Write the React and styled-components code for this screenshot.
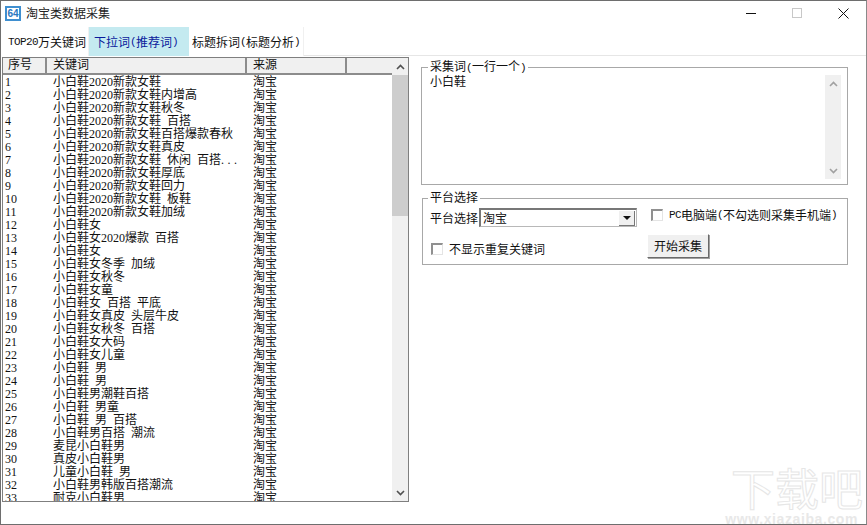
import React from 'react'
import styled, { createGlobalStyle } from 'styled-components'

const GlobalStyle = createGlobalStyle`
  html, body {
    margin: 0;
    padding: 0;
    background: #fff;
  }
  * { box-sizing: border-box; }
`

const rows = [
  '小白鞋2020新款女鞋', '小白鞋2020新款女鞋内增高', '小白鞋2020新款女鞋秋冬', '小白鞋2020新款女鞋 百搭',
  '小白鞋2020新款女鞋百搭爆款春秋', '小白鞋2020新款女鞋真皮', '小白鞋2020新款女鞋 休闲 百搭...', '小白鞋2020新款女鞋厚底',
  '小白鞋2020新款女鞋回力', '小白鞋2020新款女鞋 板鞋', '小白鞋2020新款女鞋加绒', '小白鞋女',
  '小白鞋女2020爆款 百搭', '小白鞋女', '小白鞋女冬季 加绒', '小白鞋女秋冬',
  '小白鞋女童', '小白鞋女 百搭 平底', '小白鞋女真皮 头层牛皮', '小白鞋女秋冬 百搭',
  '小白鞋女大码', '小白鞋女儿童', '小白鞋 男', '小白鞋 男',
  '小白鞋男潮鞋百搭', '小白鞋 男童', '小白鞋 男 百搭', '小白鞋男百搭 潮流',
  '麦昆小白鞋男', '真皮小白鞋男', '儿童小白鞋 男', '小白鞋男韩版百搭潮流', '耐克小白鞋男',
]

const Window = styled.div`
  position: relative;
  width: 867px;
  height: 525px;
  overflow: hidden;
  background: #fff;
  border: 1px solid #6e6e6e;
  border-right-color: #8a8a8a;
  font-family: "Liberation Serif", "Noto Sans CJK SC", serif;
  font-size: 12px;
  color: #111;
`

// half width latin, the way the bitmap font of the original has it
const Half = styled.span`
  font-family: "Liberation Mono", monospace;
  font-size: 11px;
  letter-spacing: -.6px;
`

const TitleBar = styled.div`
  display: flex;
  align-items: center;
  height: 26px;
  padding: 0 0 2px 4px;
`

const AppIcon = styled.div`
  width: 16px;
  height: 15px;
  margin-right: 5px;
  background: #fff;
  border: 2px solid #3f8fd0;
  color: #2a78c0;
  font: bold 10px/11px "Liberation Sans", sans-serif;
  text-align: center;
`

const Title = styled.div`
  flex: 1;
  color: #222;
`

const WinButton = styled.div`
  display: flex;
  align-items: center;
  justify-content: center;
  width: 46px;
  height: 24px;
`

const TabBar = styled.div`
  display: flex;
  height: 29px;
  border-bottom: 1px solid #e6e6e6;
`

const Tab = styled.div`
  display: flex;
  align-items: center;
  width: ${p => p.$w}px;
  height: 29px;
  padding-left: ${p => p.$pad}px;
  background: ${p => (p.$active ? '#c4eaf0' : '#fff')};
  color: ${p => (p.$active ? '#0a1a9c' : '#111')};
  border-right: ${p => (p.$active ? 'none' : '1px solid #f0f0f0')};
  white-space: nowrap;
`

const Body = styled.div`
  display: flex;
  padding: 1px 0 0 1px;
`

const ListBox = styled.div`
  display: flex;
  width: 407px;
  height: 445px;
  border: 1px solid #7f7f7f;
  overflow: hidden;
`

const ListMain = styled.div`
  flex: 1;
  min-width: 0;
`

const HeaderRow = styled.div`
  display: flex;
  height: 17px;
  background: #f0f0f0;
  border-bottom: 2px solid #8c8c8c;
`

const HeadCell = styled.div`
  width: ${p => p.$w}px;
  padding-left: ${p => p.$pad || 6}px;
  line-height: 15px;
  border-right: 2px solid #8c8c8c;
  white-space: nowrap;
  ${p => p.$last && 'border-right: none; flex: 1;'}
`

const Rows = styled.div`
  height: 426px;
  padding-top: 1px;
  overflow: hidden;
`

const Row = styled.div`
  display: flex;
  height: 13px;
  line-height: 13px;
  white-space: nowrap;
`

const NumCell = styled.div`
  width: 44px;
  padding-left: 2px;
`

const KeyCell = styled.div`
  width: 200px;
  padding-left: 6px;
  word-spacing: 3px;
`

const SourceCell = styled.div`
  padding-left: 6px;
`

const Dots = styled.span`
  letter-spacing: 3.5px;
`

const ScrollBar = styled.div`
  display: flex;
  flex-direction: column;
  flex: none;
  width: 16px;
  background: #f0f0f0;
`

const ScrollArrow = styled.div`
  display: flex;
  align-items: center;
  justify-content: center;
  flex: none;
  width: 100%;
  height: 17px;
`

const Thumb = styled.div`
  flex: none;
  width: 100%;
  height: ${p => p.$h}px;
  background: #cdcdcd;
`

const Spacer = styled.div`
  flex: 1;
`

const Side = styled.div`
  display: flex;
  flex-direction: column;
  margin-left: 12px;
  width: 427px;
`

const Group = styled.div`
  position: relative;
  height: ${p => p.$h}px;
  margin-top: ${p => p.$mt || 0}px;
  margin-left: ${p => p.$ml || 0}px;
  border: 1px solid #a8a8a8;
`

const Legend = styled.div`
  position: absolute;
  top: -8px;
  left: ${p => p.$left}px;
  padding: 0 2px;
  background: #fff;
  line-height: 14px;
  white-space: nowrap;
`

const MemoBody = styled.div`
  display: flex;
  justify-content: space-between;
  height: 100%;
  padding: 7px 6px 5px 8px;
`

const MemoText = styled.div`
  padding-top: 1px;
  line-height: 13px;
`

const PlatformGrid = styled.div`
  display: grid;
  grid-template-columns: 221px 1fr;
  grid-template-rows: 26px 1fr;
  height: 100%;
  padding: 9px 0 0 7px;
`

const FieldRow = styled.div`
  display: flex;
  align-items: center;
  height: 19px;
  white-space: nowrap;
`

const Select = styled.div`
  display: flex;
  align-items: center;
  justify-content: space-between;
  width: 158px;
  height: 19px;
  margin-left: 1px;
  padding-left: 2px;
  border: 1px solid #b8b8b8;
  border-top: 2px solid #777;
  border-left: 2px solid #777;
  background: #fff;
`

const DropButton = styled.div`
  display: flex;
  align-items: center;
  justify-content: center;
  width: 16px;
  height: 15px;
  margin-right: 1px;
  background: #f0f0f0;
  border-right: 1px solid #777;
  border-bottom: 1px solid #777;
`

const CheckRow = styled.label`
  display: flex;
  align-items: center;
  height: 13px;
  margin-top: ${p => p.$mt || 0}px;
  margin-left: ${p => p.$ml || 0}px;
  white-space: nowrap;
`

const CheckBox = styled.span`
  flex: none;
  width: 12px;
  height: 12px;
  margin-right: 6px;
  background: #fff;
  border: 1px solid #e4e4e4;
  border-top: 2px solid #909090;
  border-left: 2px solid #909090;
`

const ActionButton = styled.button`
  width: 62px;
  height: 24px;
  margin-left: -4px;
  padding: 0;
  background: #f0f0f0;
  border: 1px solid #fff;
  border-right: 1px solid #6a6a6a;
  border-bottom: 1px solid #6a6a6a;
  box-shadow: 1px 1px 0 #a0a0a0;
  font: 12px "Liberation Serif", "Noto Sans CJK SC", serif;
  color: #111;
`

const Watermark = styled.div`
  position: absolute;
  right: 3px;
  bottom: 0;
  display: flex;
  flex-direction: column;
  align-items: flex-end;
  pointer-events: none;
`

const MarkTitle = styled.div`
  margin-bottom: 4px;
  font: 44px/46px "Noto Sans CJK SC", sans-serif;
  color: transparent;
  -webkit-text-stroke: 1px #e6e6e6;
  white-space: nowrap;
`

const MarkUrl = styled.div`
  margin-right: 5px;
  font: bold 14px/10px "Liberation Sans", sans-serif;
  letter-spacing: .6px;
  color: #e8e8e8;
  white-space: nowrap;
`

const Chevron = ({ down, light }) => (
  <svg width="9" height="6" viewBox="0 0 9 6">
    <path
      d={down ? 'M1 1l3.5 3.5L8 1' : 'M1 5l3.5-3.5L8 5'}
      fill="none"
      stroke={light ? '#a0a0a0' : '#505050'}
      strokeWidth="1.6"
    />
  </svg>
)

const KeyText = ({ text }) => {
  if (!text.endsWith('...')) return text
  return <>{text.slice(0, -3)}<Dots>...</Dots></>
}

const App = () => (
  <>
    <GlobalStyle />
    <Window>
      <TitleBar>
        <AppIcon>64</AppIcon>
        <Title>淘宝类数据采集</Title>
        <WinButton>
          <svg width="10" height="10" viewBox="0 0 10 10"><path d="M0 5.5h10" stroke="#111" /></svg>
        </WinButton>
        <WinButton>
          <svg width="10" height="10" viewBox="0 0 10 10"><rect x=".5" y=".5" width="9" height="9" fill="none" stroke="#c8c8c8" /></svg>
        </WinButton>
        <WinButton>
          <svg width="11" height="11" viewBox="0 0 11 11"><path d="M.5.5l10 10M10.5.5l-10 10" stroke="#111" /></svg>
        </WinButton>
      </TitleBar>

      <TabBar>
        <Tab $w={88} $pad={7}><Half>TOP20</Half>万关键词</Tab>
        <Tab $w={100} $pad={5} $active>下拉词<Half>(</Half>推荐词<Half>)</Half></Tab>
        <Tab $w={115} $pad={3}>标题拆词<Half>(</Half>标题分析<Half>)</Half></Tab>
      </TabBar>

      <Body>
        <ListBox>
          <ListMain>
            <HeaderRow>
              <HeadCell $w={44} $pad={5}>序号</HeadCell>
              <HeadCell $w={200}>关键词</HeadCell>
              <HeadCell $w={100}>来源</HeadCell>
              <HeadCell $last />
            </HeaderRow>
            <Rows>
              {rows.map((r, i) => (
                <Row key={i}>
                  <NumCell>{i + 1}</NumCell>
                  <KeyCell><KeyText text={r} /></KeyCell>
                  <SourceCell>淘宝</SourceCell>
                </Row>
              ))}
            </Rows>
          </ListMain>
          <ScrollBar>
            <ScrollArrow><Chevron /></ScrollArrow>
            <Thumb $h={141} />
            <Spacer />
            <ScrollArrow><Chevron down /></ScrollArrow>
          </ScrollBar>
        </ListBox>

        <Side>
          <Group $h={118} $mt={10}>
            <Legend $left={6}>采集词<Half>(</Half>一行一个<Half>)</Half></Legend>
            <MemoBody>
              <MemoText>小白鞋</MemoText>
              <ScrollBar>
                <ScrollArrow><Chevron light /></ScrollArrow>
                <Spacer />
                <ScrollArrow><Chevron down light /></ScrollArrow>
              </ScrollBar>
            </MemoBody>
          </Group>

          <Group $h={67} $mt={13} $ml={1}>
            <Legend $left={5}>平台选择</Legend>
            <PlatformGrid>
              <FieldRow>
                平台选择
                <Select>
                  淘宝
                  <DropButton>
                    <svg width="8" height="4" viewBox="0 0 8 4"><path d="M0 0h8L4 4z" fill="#111" /></svg>
                  </DropButton>
                </Select>
              </FieldRow>
              <CheckRow>
                <CheckBox /><Half>PC</Half>电脑端<Half>(</Half>不勾选则采集手机端<Half>)</Half>
              </CheckRow>
              <CheckRow $mt={8} $ml={1}>
                <CheckBox />不显示重复关键词
              </CheckRow>
              <ActionButton>开始采集</ActionButton>
            </PlatformGrid>
          </Group>
        </Side>
      </Body>

      <Watermark>
        <MarkTitle>下载吧</MarkTitle>
        <MarkUrl>www.xiazaiba.com</MarkUrl>
      </Watermark>
    </Window>
  </>
)

export default App
